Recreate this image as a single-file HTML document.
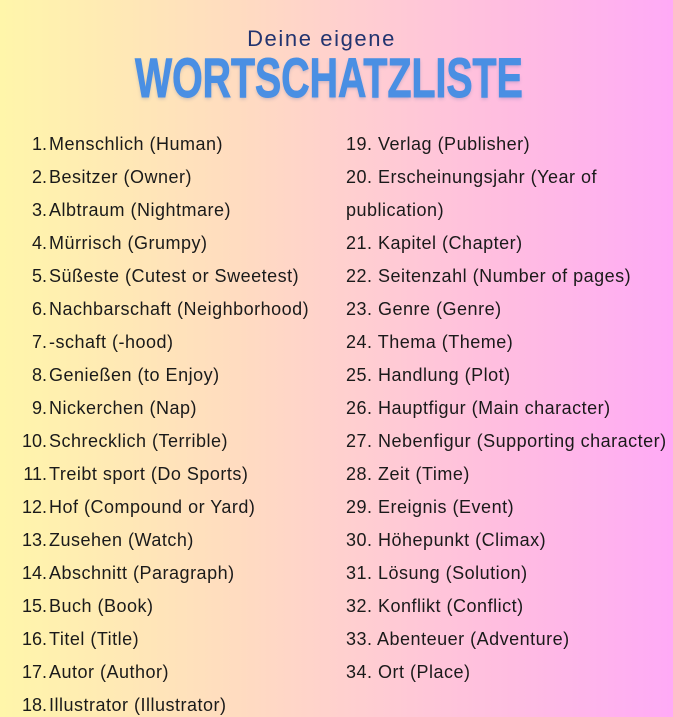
<!DOCTYPE html>
<html><head><meta charset="utf-8"><style>
html,body{margin:0;padding:0}
body{width:673px;height:717px;overflow:hidden;position:relative;background:linear-gradient(90deg,#fff6aa 0%,#ffdcc0 35%,#ffcdd2 55%,#ffbde0 75%,#ffaaf6 100%);font-family:"Liberation Sans",sans-serif;color:#1a1a1a}
.sub{position:absolute;left:0;width:643px;text-align:center;top:26px;font-size:22px;color:#23346f;letter-spacing:1.6px}
.title{position:absolute;left:135px;top:50px;width:388px;height:56px;overflow:visible}
.title span{display:block;font-family:"Liberation Sans Narrow","Liberation Sans",sans-serif;font-weight:bold;font-size:56px;line-height:56px;color:#4a8fe3;transform-origin:left top;white-space:nowrap;text-shadow:0 2px 4px rgba(60,90,160,.25);-webkit-text-stroke:1px #4a8fe3}
.row{position:absolute;font-size:18px;letter-spacing:0.5px;white-space:nowrap;line-height:20px}
.n{display:inline-block;text-align:right;width:47px;margin-right:2px;letter-spacing:0}
</style></head><body>
<div class="sub">Deine eigene</div>
<div class="title"><span id="t" style="transform:scaleX(0.93)">WORTSCHATZLISTE</span></div>
<div id="c"></div>
<script>
var L=["Menschlich (Human)","Besitzer (Owner)","Albtraum (Nightmare)","Mürrisch (Grumpy)","Süßeste (Cutest or Sweetest)","Nachbarschaft (Neighborhood)","-schaft (-hood)","Genießen (to Enjoy)","Nickerchen (Nap)","Schrecklich (Terrible)","Treibt sport (Do Sports)","Hof (Compound or Yard)","Zusehen (Watch)","Abschnitt (Paragraph)","Buch (Book)","Titel (Title)","Autor (Author)","Illustrator (Illustrator)"];
var R=["19. Verlag (Publisher)","20. Erscheinungsjahr (Year of","publication)","21. Kapitel (Chapter)","22. Seitenzahl (Number of pages)","23. Genre (Genre)","24. Thema (Theme)","25. Handlung (Plot)","26. Hauptfigur (Main character)","27. Nebenfigur (Supporting character)","28. Zeit (Time)","29. Ereignis (Event)","30. Höhepunkt (Climax)","31. Lösung (Solution)","32. Konflikt (Conflict)","33. Abenteuer (Adventure)","34. Ort (Place)"];
var h="";
for(var i=0;i<L.length;i++){h+='<div class="row" style="left:0;top:'+(134+i*33)+'px"><span class="n">'+(i+1)+'.</span>'+L[i]+'</div>';}
for(var j=0;j<R.length;j++){h+='<div class="row" style="left:346px;top:'+(134+j*33)+'px">'+R[j]+'</div>';}
document.getElementById('c').innerHTML=h;
var t=document.getElementById('t');var w=t.scrollWidth;if(w)t.style.transform='scaleX('+(388/w)+')';
</script>
</body></html>
